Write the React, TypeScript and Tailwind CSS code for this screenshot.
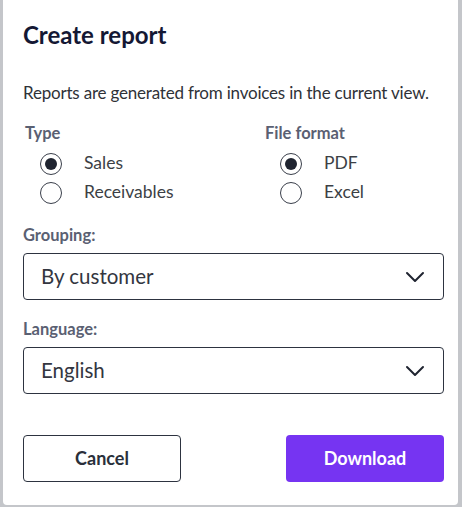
import React from "react";

const Radio = ({ on, label }: { on?: boolean; label: string }) => (
  <div className="flex items-center h-[29px]">
    <div className="w-[22px] h-[22px] ml-[17px] rounded-full border border-[#3a3f4b] flex items-center justify-center">
      {on && <div className="w-[12px] h-[12px] rounded-full bg-[#1f2430]" />}
    </div>
    <span className="ml-[22px] text-[17.5px] text-[#3c3f45]">{label}</span>
  </div>
);

const Select = ({ value }: { value: string }) => (
  <div className="h-[47px] border border-[#2d3340] rounded-[4px] flex items-center justify-between pl-[17px] pr-[18px]">
    <span className="text-[20.5px] text-[#333640]">{value}</span>
    <svg width="20" height="12" viewBox="0 0 20 12" fill="none" stroke="#1f2430" strokeWidth="2" strokeLinecap="round" strokeLinejoin="round">
      <path d="M2 2l8 8 8-8" />
    </svg>
  </div>
);

export default function App() {
  return (
    <div className="w-[462px] h-[507px] bg-[#c4c6ca] flex pl-[3px] pr-[4px] pb-[2px]" style={{ fontFamily: "Lato, 'Noto Sans', sans-serif" }}>
      <div className="flex-1 bg-white rounded-b-[4px] pl-[20px] pr-[14px] flex flex-col">
        <h1 className="mt-[19px] text-[24px] font-bold text-[#141834] leading-[32px]">Create report</h1>
        <p className="mt-[32px] text-[17px] text-[#2f3238] leading-[20px] whitespace-nowrap tracking-[-0.2px]">Reports are generated from invoices in the current view.</p>
        <div className="mt-[20px] grid grid-cols-[240px_1fr]">
          <div>
            <div className="text-[16.5px] font-bold text-[#5a6072] leading-[20px] ml-[2px]">Type</div>
            <div className="mt-[6px]"><Radio on label="Sales" /><Radio label="Receivables" /></div>
          </div>
          <div>
            <div className="text-[16.5px] font-bold text-[#5a6072] leading-[20px] ml-[2px]">File format</div>
            <div className="mt-[6px]"><Radio on label="PDF" /><Radio label="Excel" /></div>
          </div>
        </div>
        <div className="mt-[18px] text-[16.5px] font-bold text-[#5a6072] leading-[20px]">Grouping:</div>
        <div className="mt-[8px]"><Select value="By customer" /></div>
        <div className="mt-[19px] text-[16.5px] font-bold text-[#5a6072] leading-[20px]">Language:</div>
        <div className="mt-[8px]"><Select value="English" /></div>
        <div className="mt-[41px] flex justify-between">
          <button className="w-[158px] h-[47px] border border-[#2d3340] rounded-[4px] text-[18px] font-bold text-[#2a2f3a]">Cancel</button>
          <button className="w-[158px] h-[47px] rounded-[4px] bg-[#7634f2] text-[18px] font-bold text-white">Download</button>
        </div>
      </div>
    </div>
  );
}
